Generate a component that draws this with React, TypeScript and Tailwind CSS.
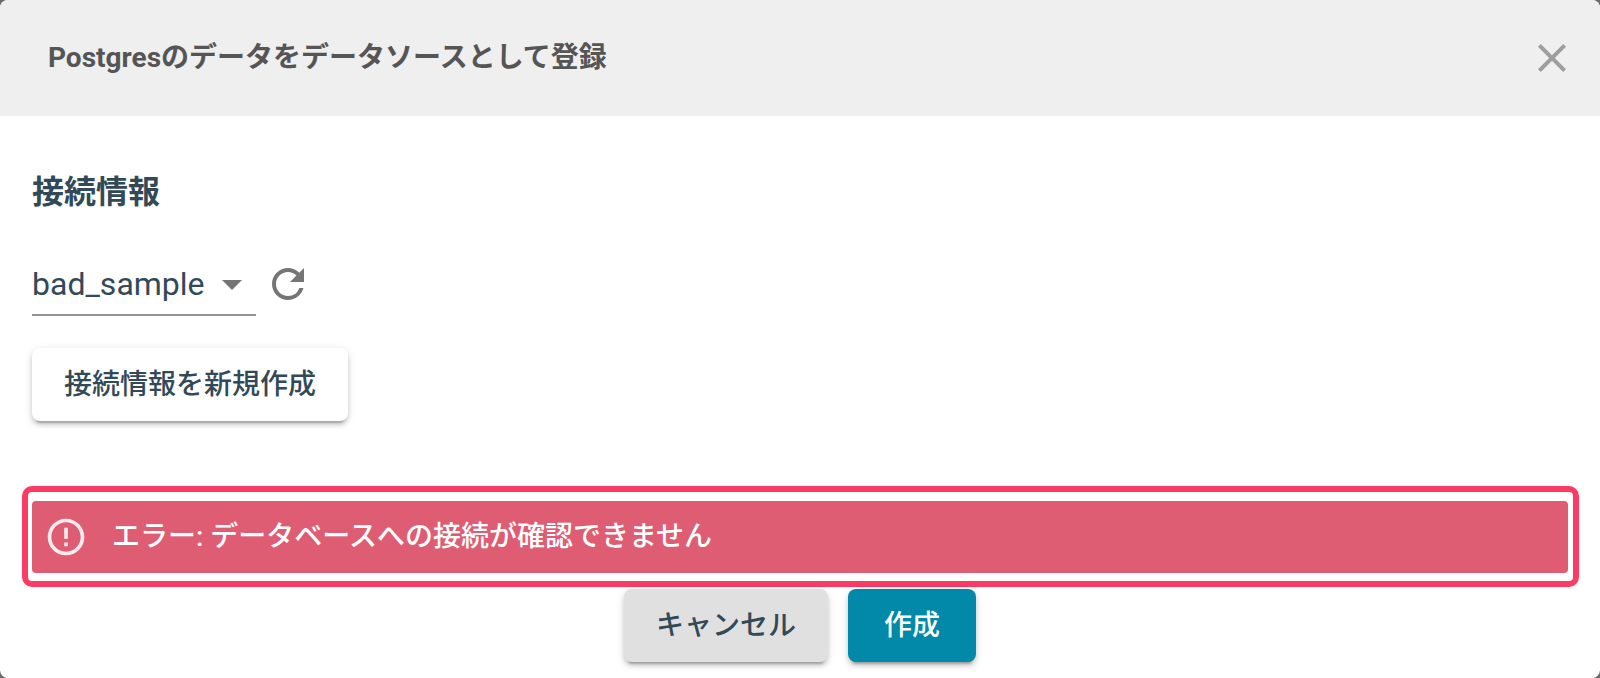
import { useState } from "react";
import { MdClose, MdErrorOutline, MdRefresh } from "react-icons/md";

const CONNECTIONS = ["bad_sample"];

const RAISED =
  "rounded-lg shadow-[0_6px_2px_-4px_rgba(0,0,0,0.2),0_4px_4px_0_rgba(0,0,0,0.14),0_2px_10px_0_rgba(0,0,0,0.12)]";

export default function App() {
  const [connection, setConnection] = useState(CONNECTIONS[0]);

  return (
    <div className="min-h-screen bg-[#6b6b6b] flex font-['Roboto','Noto_Sans_CJK_JP',sans-serif] text-[28px] leading-9 text-[#324958]">
      <div
        role="dialog"
        aria-labelledby="dialog-title"
        className="flex-1 flex flex-col rounded-lg overflow-hidden bg-white"
      >
        <header className="h-[116px] pl-12 pr-6 flex items-center justify-between bg-[#efefef]">
          <h1 id="dialog-title" className="font-bold text-[#555555]">
            Postgresのデータをデータソースとして登録
          </h1>
          <button type="button" aria-label="閉じる" className="text-[#9e9e9e]">
            <MdClose size={48} />
          </button>
        </header>

        <section className="px-8 pt-[52px] flex flex-col items-start">
          <h2 id="connection-label" className="text-[32px] leading-[48px] font-bold">
            接続情報
          </h2>

          {/* Selector de conexión */}
          <div className="mt-11 flex items-start gap-2">
            <div className="relative">
              <select
                aria-labelledby="connection-label"
                value={connection}
                onChange={(e) => setConnection(e.target.value)}
                className="appearance-none w-56 h-14 pb-2 bg-transparent text-[32px] leading-[48px] border-b-2 border-[#949494] outline-none"
              >
                {CONNECTIONS.map((name) => (
                  <option key={name} value={name}>
                    {name}
                  </option>
                ))}
              </select>
              <svg
                viewBox="0 0 20 10"
                className="absolute right-3.5 top-5 w-5 h-2.5 fill-[#757575] pointer-events-none"
              >
                <path d="M0 0h20L10 10z" />
              </svg>
            </div>
            <button type="button" aria-label="再読み込み" className="text-[#757575]">
              <MdRefresh size={48} />
            </button>
          </div>

          <button type="button" className={`mt-8 h-[73px] px-8 bg-white font-medium ${RAISED}`}>
            接続情報を新規作成
          </button>
        </section>

        {/* Mensaje de error */}
        <div className="mt-[65px] ml-[22px] mr-[21px] border-6 border-[#fb3b64] rounded-[10px] pl-1 pr-[5px] pt-[9px] pb-2">
          <div
            role="alert"
            className="h-18 pl-3 flex items-center gap-6 rounded bg-[#de5d73] text-white font-medium"
          >
            <MdErrorOutline size={44} className="text-[#ffebee]" />
            <span>エラー: データベースへの接続が確認できません</span>
          </div>
        </div>

        <footer className="mt-0.5 pb-4 flex justify-center gap-5">
          <button type="button" className={`h-[73px] px-8 bg-[#e0e0e0] font-medium ${RAISED}`}>
            キャンセル
          </button>
          <button type="button" className={`h-[73px] px-9 bg-[#0288a8] text-white font-medium ${RAISED}`}>
            作成
          </button>
        </footer>
      </div>
    </div>
  );
}
